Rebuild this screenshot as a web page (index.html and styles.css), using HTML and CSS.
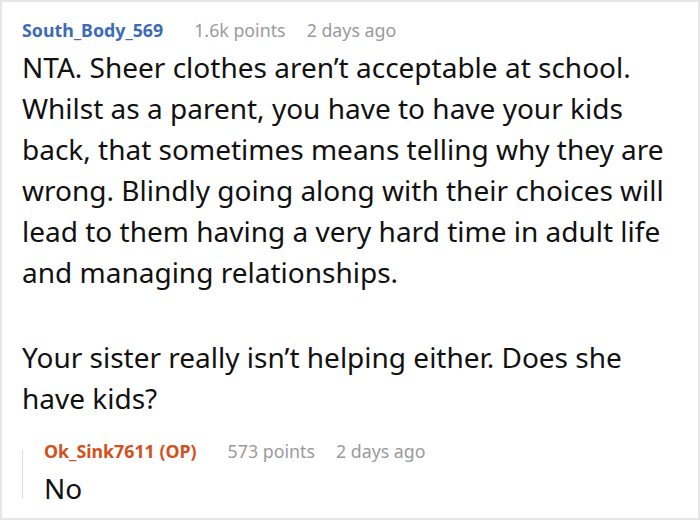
FILE: index.html
```html
<!DOCTYPE html>
<html>
<head>
<meta charset="utf-8">
<link rel="stylesheet" href="styles.css">
</head>
<body>
<div class="card">
  <div class="meta">
    <span class="user">South_Body_569</span>
    <span class="info">1.6k points</span>
    <span class="info">2 days ago</span>
  </div>
  <div class="body">
    <p>NTA. Sheer clothes aren’t acceptable at school. Whilst as a parent, you have to have your kids back, that sometimes means telling why they are wrong. Blindly going along with their choices will lead to them having a very hard time in adult life and managing relationships.</p>
    <p>Your sister really isn’t helping either. Does she have kids?</p>
  </div>
  <div class="reply">
    <div class="thread"></div>
    <div class="reply-content">
      <div class="meta">
        <span class="user op">Ok_Sink7611 (OP)</span>
        <span class="info">573 points</span>
        <span class="info">2 days ago</span>
      </div>
      <div class="body"><p>No</p></div>
    </div>
  </div>
</div>
</body>
</html>
```
FILE: styles.css
```css
html, body { margin: 0; padding: 0; background: #fff; }
.card {
  width: 700px;
  height: 520px;
  box-sizing: border-box;
  border: 2px solid #e6e6e6;
  padding: 15px 30px 0 20px;
  font-family: "Noto Sans", "Open Sans", sans-serif;
  overflow: hidden;
}
.meta {
  display: flex;
  gap: 21px;
  font-size: 17.8px;
  line-height: 26px;
  white-space: nowrap;
}
.user { font-weight: 700; color: #3b6cb5; margin-right: 10px; }
.user.op { color: #d4501c; }
.info { color: #9a9a9a; }
.body {
  color: #111;
  font-size: 28px;
  line-height: 41px;
  margin-top: 4px;
}
.body p { margin: 0 0 44px 0; }
.body p:last-child { margin-bottom: 0; }
.reply {
  display: flex;
  margin-top: 19px;
}
.thread {
  width: 1px;
  background: #dddddd;
  margin: 12px 0 10px 0;
  flex: none;
}
.reply-content { padding-left: 21px; }
```
